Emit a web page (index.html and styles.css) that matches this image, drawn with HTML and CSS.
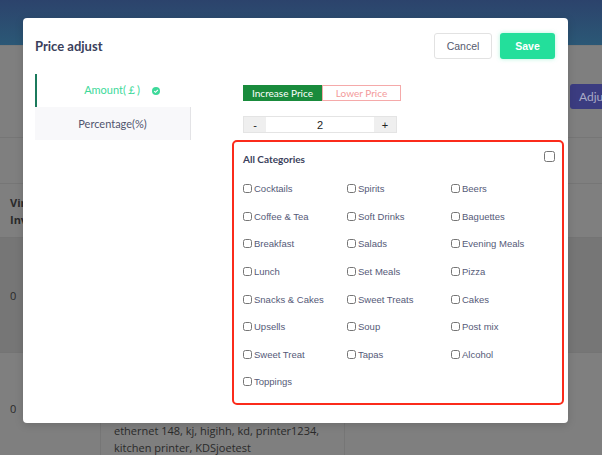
FILE: index.html
```html
<!DOCTYPE html>
<html lang="en">
<head>
    <meta charset="UTF-8">
    <meta name="viewport" content="width=device-width, initial-scale=1.0">
    <title>Price adjust</title>
    <link rel="stylesheet" href="styles.css">
</head>
<body>

<div class="page">
    <div class="topbar"></div>
    <div class="toolbar">
        <button class="adjust-btn">Adju</button>
    </div>
    <div class="filter-row"></div>
    <div class="thead">
        <div class="th">Virtual<br>Inventory</div>
    </div>
    <div class="row dark">
        <div class="cell first">0</div>
    </div>
    <div class="row">
        <div class="cell first">0</div>
        <div class="cell printers">ethernet 148, kj, higihh, kd, printer1234,<br>kitchen printer, KDSjoetest</div>
        <div class="cell"></div>
    </div>
</div>

<div class="modal">
    <div class="modal-header">
        <h2>Price adjust</h2>
        <div class="actions">
            <button class="btn cancel">Cancel</button>
            <button class="btn save">Save</button>
        </div>
    </div>

    <div class="modal-body">
        <div class="tabs">
            <div class="tab active">
                Amount(￡)
                <svg class="tick" width="8" height="8" viewBox="0 0 8 8">
                    <circle cx="4" cy="4" r="4" fill="#3dd99a"/>
                    <path d="M2.2 4.1 L3.5 5.3 L5.9 2.8" fill="none" stroke="#fff" stroke-width="1.1"/>
                </svg>
            </div>
            <div class="tab">Percentage(%)</div>
        </div>

        <div class="panel">
            <div class="price-type">
                <button class="type increase">Increase Price</button>
                <button class="type lower">Lower Price</button>
            </div>

            <div class="stepper">
                <span class="step">-</span>
                <span class="value">2</span>
                <span class="step">+</span>
            </div>

            <div class="categories">
                <div class="cat-head">
                    <span>All Categories</span>
                    <input type="checkbox" class="all">
                </div>
                <div class="cat-grid" id="cat-grid"></div>
            </div>
        </div>
    </div>
</div>

<script>
    // Kategorien ins Raster schreiben
    const categories = [
        'Cocktails', 'Spirits', 'Beers',
        'Coffee & Tea', 'Soft Drinks', 'Baguettes',
        'Breakfast', 'Salads', 'Evening Meals',
        'Lunch', 'Set Meals', 'Pizza',
        'Snacks & Cakes', 'Sweet Treats', 'Cakes',
        'Upsells', 'Soup', 'Post mix',
        'Sweet Treat', 'Tapas', 'Alcohol',
        'Toppings'
    ];

    const grid = document.getElementById('cat-grid');
    categories.forEach(function (name) {
        const label = document.createElement('label');
        label.className = 'cat';
        label.innerHTML = '<input type="checkbox"><span></span>';
        label.querySelector('span').textContent = name;
        grid.appendChild(label);
    });
</script>

</body>
</html>
```

FILE: styles.css
```css
body {
    margin: 0;
    padding: 0;
    background-color: #7f7f7f;
    font-family: Lato, "Liberation Sans", sans-serif;
    overflow: hidden;
    height: 455px;
}

/* dimmed page behind the dialog */
.page {
    position: relative;
}
.topbar {
    height: 45px;
    background: linear-gradient(#2c436c, #2b5876);
}
.toolbar {
    height: 92px;
    box-sizing: border-box;
    padding: 38px 0 0 570px;
    border-top: 1px solid #7a7a7a;
}
.adjust-btn {
    width: 40px;
    height: 25px;
    padding: 0 0 0 9px;
    border: none;
    border-radius: 3px 0 0 3px;
    background-color: #3b3c80;
    color: #a9aac6;
    font-family: Lato, sans-serif;
    font-size: 12px;
    text-align: left;
    white-space: nowrap;
}
.filter-row {
    height: 46px;
    box-sizing: border-box;
    border-top: 1px solid #767676;
}
.thead {
    height: 54px;
    box-sizing: border-box;
    border-top: 1px solid #767676;
    display: flex;
    align-items: center;
}
.th {
    padding-left: 10px;
    font-size: 11px;
    font-weight: bold;
    line-height: 17px;
    color: #2a2a2a;
    font-family: "Open Sans", sans-serif;
}
.row {
    height: 112px;
    display: flex;
    border-top: 1px solid #747474;
    box-sizing: border-box;
}
.row.dark {
    height: 115px;
    background-color: #767676;
}
.cell {
    display: flex;
    align-items: center;
    font-family: "Open Sans", sans-serif;
    font-size: 11px;
    color: #2a2a2a;
}
.cell.first {
    width: 100px;
    padding-left: 10px;
    box-sizing: border-box;
}
.cell.printers {
    width: 245px;
    box-sizing: border-box;
    border-left: 1px solid #767676;
    border-right: 1px solid #767676;
    padding: 0 0 8px 13px;
    align-items: flex-end;
    line-height: 17px;
}

/* dialog */
.modal {
    position: absolute;
    left: 23px;
    top: 18px;
    width: 545px;
    height: 405px;
    box-sizing: border-box;
    padding: 15px 4px 18px 12px;
    background-color: #fff;
    border-radius: 4px;
    box-shadow: 0 2px 8px rgba(0, 0, 0, 0.15);
    display: flex;
    flex-direction: column;
}
.modal-header {
    display: flex;
    justify-content: space-between;
    align-items: center;
    margin-right: 9px;
}
.modal-header h2 {
    margin: 0;
    font-size: 13px;
    font-weight: bold;
    color: #3b3f5c;
}
.actions {
    display: flex;
    gap: 8px;
}
.btn {
    height: 26px;
    border-radius: 3px;
    font-family: "Liberation Sans", Arial, sans-serif;
    font-size: 10.5px;
    cursor: pointer;
}
.btn.cancel {
    width: 58px;
    background-color: #fff;
    border: 1px solid #e2e2e2;
    color: #555a6e;
}
.btn.save {
    width: 55px;
    background-color: #23df9b;
    border: none;
    color: #fff;
    font-weight: bold;
    box-shadow: 0 0 4px rgba(35, 223, 155, 0.35);
}

.modal-body {
    display: flex;
    flex: 1;
    margin-top: 15px;
}
.tabs {
    width: 156px;
    align-self: flex-start;
}
.tab {
    height: 33px;
    display: flex;
    align-items: center;
    justify-content: center;
    font-size: 11px;
    color: #50546e;
    background-color: #f8f8fa;
    border-right: 1px solid #e3e3e6;
}
.tab.active {
    background-color: #fff;
    border-right: none;
    border-left: 2px solid #1b7a5c;
    color: #3dd99a;
    padding-left: 16px;
}
.tick {
    margin-left: 12px;
}

.panel {
    flex: 1;
    margin-left: 41px;
    display: flex;
    flex-direction: column;
}
.price-type {
    display: flex;
    margin: 11px 0 0 11px;
}
.type {
    height: 16px;
    width: 79px;
    padding: 0;
    font-family: Lato, sans-serif;
    font-size: 10px;
    border-radius: 0;
}
.type.increase {
    background-color: #198b3c;
    color: #fff;
    border: 1px solid #198b3c;
}
.type.lower {
    background-color: #fff;
    color: #f39a9a;
    border: 1px solid #f5a9a9;
}
.stepper {
    display: flex;
    width: 154px;
    height: 17px;
    margin: 15px 0 0 11px;
    border: 1px solid #e4e4e4;
    box-sizing: border-box;
    font-family: "Liberation Sans", sans-serif;
    font-size: 11px;
    color: #222;
}
.stepper span {
    display: flex;
    align-items: center;
    justify-content: center;
}
.step {
    width: 22px;
    background-color: #efefef;
}
.value {
    flex: 1;
}

.categories {
    flex: 1;
    margin-top: 7px;
    border: 2px solid #fb2b1b;
    border-radius: 5px;
    padding: 9px 7px 0 9px;
}
.cat-head {
    display: flex;
    justify-content: space-between;
    align-items: flex-start;
    font-size: 10px;
    font-weight: bold;
    color: #3b3f5c;
    line-height: 13px;
}
.cat-head span {
    margin-top: 2px;
}
.cat-head .all {
    width: 11px;
    height: 11px;
    margin: 0;
}
.cat-grid {
    display: grid;
    grid-template-columns: 104px 104px 104px;
    grid-auto-rows: 27.6px;
    margin-top: 9px;
}
.cat {
    display: flex;
    align-items: center;
    font-family: "Liberation Sans", Arial, sans-serif;
    font-size: 9.5px;
    color: #555a78;
}
.cat input {
    width: 9px;
    height: 9px;
    margin: 0 2px 0 0;
}
```
